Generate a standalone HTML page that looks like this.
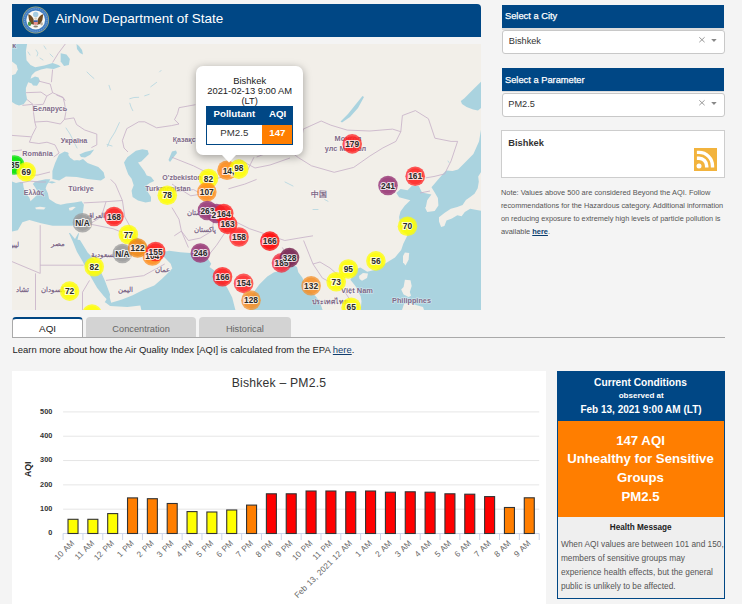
<!DOCTYPE html>
<html><head><meta charset="utf-8">
<style>
*{box-sizing:border-box;margin:0;padding:0}
html,body{width:742px;height:604px;overflow:hidden;background:#f4f4f4;font-family:"Liberation Sans",sans-serif;position:relative}
.abs{position:absolute}
</style></head><body>
<div class="abs" style="left:12px;top:4px;width:469px;height:33px;background:#004785;border-radius:0 4px 0 0"></div>
<svg class="abs" style="left:0;top:0" width="60" height="40" viewBox="0 0 60 40">
<circle cx="35.7" cy="20" r="13.4" fill="#a9ad78"/>
<circle cx="35.7" cy="20" r="12.7" fill="#3f7cc0"/>
<circle cx="35.7" cy="20" r="11.3" fill="none" stroke="#7fa6d6" stroke-width="1" stroke-dasharray="1.2 1"/>
<circle cx="35.7" cy="20" r="9.4" fill="#f8f8f4"/>
<circle cx="35.7" cy="14.4" r="2.7" fill="#a5cde2"/>
<path d="M28.2 14.2 Q31.5 14.8 33.5 19 L34.3 24.8 L31 24 Q28.3 20 28.2 14.2Z" fill="#6e4b22"/>
<path d="M43.2 14.2 Q39.9 14.8 37.9 19 L37.1 24.8 L40.4 24 Q43.1 20 43.2 14.2Z" fill="#6e4b22"/>
<circle cx="35.7" cy="18.5" r="1.3" fill="#d9d2c0"/>
<rect x="33.7" y="20.3" width="4" height="1.7" fill="#3a5ea8"/>
<path d="M33.7 22 H37.7 V24 Q35.7 26.2 33.7 24Z" fill="#e58b8b"/>
<ellipse cx="29.6" cy="23.8" rx="1.7" ry="2.2" fill="#4f9a4a"/>
<ellipse cx="41.6" cy="23.8" rx="1.3" ry="1.8" fill="#b9b0a0"/>
<ellipse cx="35.7" cy="26.6" rx="2.3" ry="1" fill="#8a8472"/>
</svg>
<div class="abs" style="left:55.20px;top:11.63px;font-size:13.5px;line-height:13.5px;color:#fff;font-weight:normal;white-space:nowrap;">AirNow Department of State</div>
<div class="abs" style="left:12px;top:44px;width:469px;height:266px;overflow:hidden;background:#f2efe9"><svg style="position:absolute;left:0;top:0" width="469" height="266" viewBox="12 44 469 266">
<rect x="12" y="44" width="469" height="266" fill="#f2efe9"/>
<polygon points="12.0,44.0 27.1,44.0 25.9,51.0 26.5,60.2 30.5,64.9 35.2,67.2 44.4,65.4 52.6,63.1 58.3,64.9 60.7,66.6 53.7,68.9 46.8,68.3 41.0,69.5 35.2,71.8 31.7,75.3 30.5,78.8 35.0,76.5 38.5,77.5 40.0,81.1 37.0,85.7 33.0,85.5 31.7,83.4 28.2,82.2 25.9,88.0 25.9,92.7 27.1,99.6 23.6,104.3 19.0,105.4 15.5,104.3 12.0,101.9" fill="#aad3df"/>
<polygon points="60.7,53.3 66.5,54.4 69.9,59.1 68.8,64.9 64.1,66.0 60.7,61.4" fill="#aad3df"/>
<polygon points="76.5,44.0 79.0,46.0 82.0,50.0 83.0,54.4 80.0,53.0 77.0,49.0" fill="#aad3df"/>
<polygon points="52.4,171.0 55.1,162.9 59.0,154.5 64.6,151.5 68.0,152.5 70.0,156.0 74.0,159.5 79.4,160.5 83.0,159.0 87.5,162.9 98.3,167.0 103.6,172.3 105.0,177.7 100.9,180.4 87.5,179.1 76.7,177.1 65.9,176.4 59.2,180.4 52.4,179.1" fill="#aad3df"/>
<polygon points="79.4,154.5 85.0,152.0 90.2,150.8 94.2,149.4 90.2,154.8 85.0,157.5 81.0,157.0" fill="#aad3df"/>
<polygon points="47.0,182.0 52.0,181.3 56.0,182.3 52.0,183.5" fill="#aad3df"/>
<polygon points="12.0,181.6 16.0,183.0 20.0,182.0 23.0,182.8 23.6,187.4 25.9,193.2 29.4,197.8 30.5,201.3 32.9,199.0 35.2,196.7 38.7,193.2 35.2,187.4 32.9,183.9 35.2,181.6 39.8,180.4 45.6,179.3 50.3,179.3 49.1,181.6 46.8,185.1 45.6,188.6 47.9,193.2 49.1,199.0 56.1,203.6 60.7,204.8 66.5,203.6 74.6,202.5 81.6,201.3 83.9,204.8 82.7,214.1 81.6,222.2 72.3,225.7 64.2,225.7 52.6,225.7 41.0,223.3 29.4,219.9 22.4,222.2 17.8,230.3 12.0,231.4" fill="#aad3df"/>
<polygon points="68.9,232.9 70.0,233.0 75.0,239.0 78.4,232.9 79.0,233.5 77.5,239.8 80.0,240.0 87.8,252.7 94.0,259.0 100.0,270.0 105.0,281.0 110.1,294.4 108.5,300.9 103.7,296.0 97.2,287.9 92.0,279.0 86.0,268.0 82.8,261.7 76.9,251.7 72.9,241.8" fill="#aad3df"/>
<polygon points="135.9,150.8 142.3,149.2 147.7,150.2 148.8,154.0 145.6,157.3 141.3,161.6 138.0,162.6 141.3,167.0 144.5,171.3 146.7,175.6 151.0,176.7 154.2,181.0 149.9,183.1 146.7,185.3 147.7,191.8 151.0,197.1 151.0,201.5 145.6,202.5 138.0,200.4 132.6,197.1 131.6,190.7 133.7,185.3 131.6,178.8 128.3,174.5 126.2,169.1 124.0,162.6 127.3,157.3 131.6,154.0" fill="#aad3df"/>
<polygon points="172.0,151.5 176.0,150.5 177.0,153.0 173.0,158.0 170.0,162.0 168.5,160.0" fill="#aad3df"/>
<polygon points="134.0,236.0 138.0,238.0 145.0,244.0 152.0,248.0 158.0,250.0 163.0,252.0 165.0,256.0 160.0,256.0 152.0,254.0 146.0,251.0 140.0,247.0 135.0,241.0" fill="#aad3df"/>
<polygon points="109.0,295.2 111.2,302.7 122.0,299.5 132.7,295.2 143.5,289.8 154.3,285.5 161.8,279.0 166.2,274.7 172.3,268.5 170.7,263.7 164.3,257.2 158.0,254.0 161.0,252.3 169.1,250.7 180.4,252.3 193.4,253.2 204.7,254.0 207.9,258.8 211.2,263.7 209.5,266.9 216.0,271.8 220.9,278.2 227.3,287.9 232.2,297.6 235.4,310.0 100.0,310.0" fill="#aad3df"/>
<polygon points="249.8,310.0 252.5,293.9 259.3,284.5 267.3,276.4 274.1,272.3 280.8,271.0 288.9,268.3 294.3,265.6 297.0,267.0 298.3,272.3 302.4,277.7 305.1,284.5 310.5,291.2 315.9,296.6 319.9,302.0 322.6,310.0" fill="#aad3df"/>
<polygon points="482.0,124.0 479.0,141.4 473.4,154.0 465.0,162.5 458.0,169.5 452.5,171.0 446.5,170.5 444.4,172.2 437.9,179.7 431.5,187.2 434.7,192.6 437.9,198.0 438.4,205.5 434.7,210.9 427.2,211.9 425.0,207.6 425.8,207.2 427.2,200.2 431.4,194.5 424.4,193.1 421.6,191.7 418.8,186.1 411.7,186.1 407.5,190.3 400.5,188.9 396.3,193.1 399.1,197.3 410.3,200.2 404.7,205.8 400.5,211.4 399.1,217.0 400.5,228.3 407.5,235.3 403.3,243.8 401.2,249.9 395.0,257.4 386.0,262.9 376.6,269.6 367.2,271.7 360.4,267.6 356.4,269.0 353.7,275.0 350.3,279.8 353.8,284.1 356.4,287.5 358.1,291.8 360.7,296.2 361.5,301.3 360.7,310.0 482.0,310.0" fill="#aad3df"/>
<polygon points="482.0,80.9 473.1,89.5 464.4,98.2 460.8,101.0 462.0,104.0 466.6,106.9 473.1,109.5 478.0,110.5 482.0,107.0" fill="#aad3df"/>
<polygon points="362.5,96.0 364.0,97.0 358.0,108.0 350.0,117.0 342.0,122.5 340.5,121.5 348.0,114.0 356.0,104.0" fill="#aad3df"/>
<polygon points="12.0,61.4 16.6,64.9 17.8,69.5 15.5,74.1 12.0,75.3" fill="#f2efe9"/>
<polygon points="68.0,154.5 72.0,153.0 77.0,154.5 80.0,157.0 78.0,160.0 74.0,160.5 70.0,157.5" fill="#f2efe9"/>
<polygon points="35.2,207.5 40.0,206.8 45.6,207.6 44.0,209.4 36.0,209.2" fill="#f2efe9"/>
<polygon points="68.8,208.0 73.0,206.8 75.8,207.0 72.0,210.2 69.5,210.6" fill="#f2efe9"/>
<polygon points="100.0,310.0 100.0,300.0 105.8,302.7 110.1,306.0 127.3,307.0 140.3,305.4 141.4,310.0" fill="#f2efe9"/>
<polygon points="439.0,217.3 444.4,213.0 450.8,208.7 457.3,207.1 462.6,205.0 465.9,200.1 470.2,196.9 474.5,193.7 477.7,188.3 478.8,181.8 478.2,176.5 480.9,172.2 482.0,172.2 482.0,210.9 475.5,209.8 470.2,208.7 464.8,211.9 461.6,216.2 457.3,215.2 451.9,218.4 446.5,220.5 444.4,225.9 441.1,227.0 439.0,221.6" fill="#f2efe9"/>
<polygon points="404.9,252.4 409.2,253.0 408.6,259.8 405.5,265.4 403.0,262.3 403.0,256.1" fill="#f2efe9"/>
<polygon points="404.9,279.7 410.5,280.3 411.7,285.9 409.8,292.1 411.1,295.8 408.6,297.0 403.6,294.6 401.2,289.6 403.6,287.1" fill="#f2efe9"/>
<polygon points="359.0,276.0 363.0,273.0 368.0,273.5 367.0,278.0 362.0,280.7 359.5,279.0" fill="#f2efe9"/>
<polygon points="402.0,310.0 404.0,304.0 410.0,303.0 416.0,305.0 423.0,307.0 424.0,310.0" fill="#f2efe9"/>
<polyline points="129.8,98.7 134.0,97.5 138.7,97.3" fill="none" stroke="#aad3df" stroke-width="0.9" stroke-opacity="0.8" stroke-linecap="round"/>
<polyline points="129.8,103.2 131.0,107.0 132.8,110.7" fill="none" stroke="#aad3df" stroke-width="0.9" stroke-opacity="0.8" stroke-linecap="round"/>
<polyline points="144.7,95.8 149.2,94.3" fill="none" stroke="#aad3df" stroke-width="0.9" stroke-opacity="0.8" stroke-linecap="round"/>
<polyline points="150.7,86.8 156.6,82.4" fill="none" stroke="#aad3df" stroke-width="0.9" stroke-opacity="0.8" stroke-linecap="round"/>
<polyline points="159.6,71.9 161.1,70.4" fill="none" stroke="#aad3df" stroke-width="0.9" stroke-opacity="0.8" stroke-linecap="round"/>
<polyline points="109.0,85.3 110.4,89.8" fill="none" stroke="#aad3df" stroke-width="0.9" stroke-opacity="0.8" stroke-linecap="round"/>
<polyline points="119.4,122.6 115.0,132.0 110.0,140.0 107.5,146.4" fill="none" stroke="#aad3df" stroke-width="0.9" stroke-opacity="0.8" stroke-linecap="round"/>
<polyline points="87.0,72.0 90.0,75.0 94.0,78.5" fill="none" stroke="#aad3df" stroke-width="0.9" stroke-opacity="0.8" stroke-linecap="round"/>
<polyline points="66.0,128.0 70.0,134.0 74.0,142.0 77.0,148.0" fill="none" stroke="#aad3df" stroke-width="0.9" stroke-opacity="0.8" stroke-linecap="round"/>
<polyline points="107.0,144.5 112.0,146.0" fill="none" stroke="#aad3df" stroke-width="0.9" stroke-opacity="0.8" stroke-linecap="round"/>
<polyline points="285.0,182.0 289.0,184.0 293.0,186.0" fill="none" stroke="#aad3df" stroke-width="0.9" stroke-opacity="0.8" stroke-linecap="round"/>
<polyline points="324.7,199.6 328.0,201.3" fill="none" stroke="#aad3df" stroke-width="0.9" stroke-opacity="0.8" stroke-linecap="round"/>
<polyline points="313.0,209.5 318.0,209.5" fill="none" stroke="#aad3df" stroke-width="0.9" stroke-opacity="0.8" stroke-linecap="round"/>
<polyline points="448.0,161.0 449.0,162.5" fill="none" stroke="#aad3df" stroke-width="0.9" stroke-opacity="0.8" stroke-linecap="round"/>
<polyline points="28.0,52.0 30.0,55.0" fill="none" stroke="#aad3df" stroke-width="0.9" stroke-opacity="0.8" stroke-linecap="round"/>
<polyline points="36.0,50.0 38.0,53.0 37.0,56.0" fill="none" stroke="#aad3df" stroke-width="0.9" stroke-opacity="0.8" stroke-linecap="round"/>
<polyline points="44.0,46.0 46.0,49.0" fill="none" stroke="#aad3df" stroke-width="0.9" stroke-opacity="0.8" stroke-linecap="round"/>
<polyline points="50.0,54.0 53.0,57.0" fill="none" stroke="#aad3df" stroke-width="0.9" stroke-opacity="0.8" stroke-linecap="round"/>
<polyline points="40.0,58.0 43.0,60.0" fill="none" stroke="#aad3df" stroke-width="0.9" stroke-opacity="0.8" stroke-linecap="round"/>
<polyline points="65.3,44.0 58.3,53.3 52.6,62.5" fill="none" stroke="#c5aec6" stroke-width="0.8"/>
<polyline points="52.6,69.5 51.4,82.2" fill="none" stroke="#c5aec6" stroke-width="0.8"/>
<polyline points="38.7,81.1 50.2,84.0" fill="none" stroke="#c5aec6" stroke-width="0.8"/>
<polyline points="50.2,84.0 52.6,92.7 63.0,97.3 65.3,100.8" fill="none" stroke="#c5aec6" stroke-width="0.8"/>
<polyline points="25.9,92.7 41.0,92.1 46.8,96.1 52.6,92.7" fill="none" stroke="#c5aec6" stroke-width="0.8"/>
<polyline points="46.8,96.1 43.3,104.3 32.8,105.1" fill="none" stroke="#c5aec6" stroke-width="0.8"/>
<polyline points="27.1,99.6 32.9,104.3 22.4,105.4" fill="none" stroke="#c5aec6" stroke-width="0.8"/>
<polyline points="56.4,95.0 63.1,97.7 64.5,103.1 65.8,112.5 64.5,119.3" fill="none" stroke="#c5aec6" stroke-width="0.8"/>
<polyline points="34.8,122.0 47.0,121.3 60.4,124.0 64.5,119.3" fill="none" stroke="#c5aec6" stroke-width="0.8"/>
<polyline points="34.8,122.0 33.5,112.5 32.8,105.1" fill="none" stroke="#c5aec6" stroke-width="0.8"/>
<polyline points="64.5,119.3 73.9,117.9 76.6,124.6 84.7,130.0 96.8,134.1 96.8,144.9 91.4,147.6" fill="none" stroke="#c5aec6" stroke-width="0.8"/>
<polyline points="34.8,122.0 36.2,127.3 32.1,135.4 29.4,142.2" fill="none" stroke="#c5aec6" stroke-width="0.8"/>
<polyline points="12.0,135.4 30.8,136.8" fill="none" stroke="#c5aec6" stroke-width="0.8"/>
<polyline points="47.0,142.2 55.0,144.9 59.1,153.0 53.7,157.0" fill="none" stroke="#c5aec6" stroke-width="0.8"/>
<polyline points="29.4,142.2 38.9,143.5 47.0,142.2" fill="none" stroke="#c5aec6" stroke-width="0.8"/>
<polyline points="12.0,151.0 22.0,150.0" fill="none" stroke="#c5aec6" stroke-width="0.8"/>
<polyline points="12.0,172.0 22.0,176.0 38.0,175.0 50.0,172.0" fill="none" stroke="#c5aec6" stroke-width="0.8"/>
<polyline points="20.0,183.0 30.0,181.0 38.0,182.0 46.0,182.0" fill="none" stroke="#c5aec6" stroke-width="0.8"/>
<polyline points="128.0,152.0 124.0,148.0 122.4,140.5 126.8,128.6 138.7,121.8 144.7,121.8 156.6,127.8 171.5,125.6 179.0,124.0 174.5,119.6 177.5,113.7 179.0,107.7 195.4,104.7" fill="none" stroke="#c5aec6" stroke-width="0.8"/>
<polyline points="83.7,202.9 106.0,201.7 122.4,200.5" fill="none" stroke="#c5aec6" stroke-width="0.8"/>
<polyline points="122.4,200.5 115.4,184.1 110.7,179.4" fill="none" stroke="#c5aec6" stroke-width="0.8"/>
<polyline points="106.0,201.7 101.3,217.0 89.5,224.0" fill="none" stroke="#c5aec6" stroke-width="0.8"/>
<polyline points="122.4,200.5 124.8,217.0 136.5,238.1" fill="none" stroke="#c5aec6" stroke-width="0.8"/>
<polyline points="89.5,224.0 113.0,228.7 136.5,238.1" fill="none" stroke="#c5aec6" stroke-width="0.8"/>
<polyline points="40.2,225.2 40.2,273.4" fill="none" stroke="#c5aec6" stroke-width="0.8"/>
<polyline points="40.2,265.2 83.7,265.2" fill="none" stroke="#c5aec6" stroke-width="0.8"/>
<polyline points="12.0,261.6 40.2,273.4" fill="none" stroke="#c5aec6" stroke-width="0.8"/>
<polyline points="35.5,273.4 35.5,312.0" fill="none" stroke="#c5aec6" stroke-width="0.8"/>
<polyline points="106.0,280.4 143.6,275.7 164.7,264.0" fill="none" stroke="#c5aec6" stroke-width="0.8"/>
<polyline points="89.5,280.4 82.5,292.2 82.5,312.0" fill="none" stroke="#c5aec6" stroke-width="0.8"/>
<polyline points="172.0,184.1 190.8,195.8 204.9,193.5" fill="none" stroke="#c5aec6" stroke-width="0.8"/>
<polyline points="202.5,202.9 214.3,217.0 212.0,231.1 200.2,238.1 188.4,240.5 181.4,231.1 174.3,235.8" fill="none" stroke="#c5aec6" stroke-width="0.8"/>
<polyline points="172.0,207.6 179.0,219.3 181.4,231.1 188.4,247.5" fill="none" stroke="#c5aec6" stroke-width="0.8"/>
<polyline points="219.0,217.0 226.0,231.1 216.6,245.2 207.2,256.9" fill="none" stroke="#c5aec6" stroke-width="0.8"/>
<polyline points="226.0,217.0 249.5,228.7 270.7,235.8 284.8,240.5 298.9,238.1 313.0,235.8" fill="none" stroke="#c5aec6" stroke-width="0.8"/>
<polyline points="228.4,188.8 244.8,184.1 256.6,179.4" fill="none" stroke="#c5aec6" stroke-width="0.8"/>
<polyline points="282.4,247.5 291.8,264.0" fill="none" stroke="#c5aec6" stroke-width="0.8"/>
<polyline points="303.6,240.5 313.0,264.0 322.4,278.1" fill="none" stroke="#c5aec6" stroke-width="0.8"/>
<polyline points="172.0,157.3 193.6,165.9 210.8,174.5" fill="none" stroke="#c5aec6" stroke-width="0.8"/>
<polyline points="215.1,178.8 228.1,175.6" fill="none" stroke="#c5aec6" stroke-width="0.8"/>
<polyline points="253.9,157.3 247.5,170.2" fill="none" stroke="#c5aec6" stroke-width="0.8"/>
<polyline points="172.0,191.8 193.6,189.6 208.7,198.2" fill="none" stroke="#c5aec6" stroke-width="0.8"/>
<polyline points="240.0,160.0 255.0,168.0 270.0,165.0 290.0,158.0" fill="none" stroke="#c5aec6" stroke-width="0.8"/>
<polyline points="214.0,100.0 240.0,116.0 270.0,118.0 300.0,112.0" fill="none" stroke="#c5aec6" stroke-width="0.8"/>
<polyline points="303.3,129.1 321.2,121.0 330.9,125.2 347.2,130.1 369.9,131.0 392.6,129.1 400.8,131.7 395.9,141.4 382.9,147.9 369.9,156.0 353.7,167.4 334.2,172.3 311.5,165.8 298.5,157.7 292.0,152.8 301.7,138.2 303.3,129.1" fill="none" stroke="#c5aec6" stroke-width="0.8"/>
<polyline points="400.8,131.7 402.4,115.5 415.4,110.6 428.4,118.7 434.9,138.2 451.1,141.4 457.6,141.4 451.1,160.9 444.6,173.9 434.0,176.5 425.6,177.9" fill="none" stroke="#c5aec6" stroke-width="0.8"/>
<polyline points="303.3,129.1 296.0,125.0 290.0,120.0" fill="none" stroke="#c5aec6" stroke-width="0.8"/>
<polyline points="292.0,152.8 280.0,150.0 270.0,152.0 256.6,157.0" fill="none" stroke="#c5aec6" stroke-width="0.8"/>
<polyline points="420.0,193.0 430.0,191.0" fill="none" stroke="#c5aec6" stroke-width="0.8"/>
<polyline points="322.4,278.1 330.0,282.0 338.0,286.0 345.0,292.0 350.0,300.0" fill="none" stroke="#c5aec6" stroke-width="0.8"/>
<polyline points="313.0,264.0 320.0,262.0 330.0,268.0 338.0,275.0" fill="none" stroke="#c5aec6" stroke-width="0.8"/>
<text x="14.2" y="47.6" text-anchor="middle" font-size="7" font-weight="bold" fill="#806a88" stroke="#fff" stroke-opacity="0.5" stroke-width="1.2" paint-order="stroke" style="font-family:'Liberation Sans',sans-serif">k</text>
<text x="50" y="110.5" text-anchor="middle" font-size="7.2" font-weight="bold" fill="#806a88" stroke="#fff" stroke-opacity="0.5" stroke-width="1.2" paint-order="stroke" style="font-family:'Liberation Sans',sans-serif">Беларусь</text>
<text x="74" y="142.5" text-anchor="middle" font-size="7.2" font-weight="bold" fill="#806a88" stroke="#fff" stroke-opacity="0.5" stroke-width="1.2" paint-order="stroke" style="font-family:'Liberation Sans',sans-serif">Україна</text>
<text x="37.5" y="155.5" text-anchor="middle" font-size="7.2" font-weight="bold" fill="#806a88" stroke="#fff" stroke-opacity="0.5" stroke-width="1.2" paint-order="stroke" style="font-family:'Liberation Sans',sans-serif">România</text>
<text x="81" y="191" text-anchor="middle" font-size="7.2" font-weight="bold" fill="#806a88" stroke="#fff" stroke-opacity="0.5" stroke-width="1.2" paint-order="stroke" style="font-family:'Liberation Sans',sans-serif">Türkiye</text>
<text x="34" y="195" text-anchor="middle" font-size="7" font-weight="bold" fill="#806a88" stroke="#fff" stroke-opacity="0.5" stroke-width="1.2" paint-order="stroke" style="font-family:'Liberation Sans',sans-serif">Ελλάς</text>
<text x="190" y="142" text-anchor="middle" font-size="7" font-weight="bold" fill="#806a88" stroke="#fff" stroke-opacity="0.5" stroke-width="1.2" paint-order="stroke" style="font-family:'Liberation Sans',sans-serif">Қазақстан</text>
<text x="182" y="180" text-anchor="middle" font-size="7" font-weight="bold" fill="#806a88" stroke="#fff" stroke-opacity="0.5" stroke-width="1.2" paint-order="stroke" style="font-family:'Liberation Sans',sans-serif">O'zbekiston</text>
<text x="168" y="191" text-anchor="middle" font-size="7" font-weight="bold" fill="#806a88" stroke="#fff" stroke-opacity="0.5" stroke-width="1.2" paint-order="stroke" style="font-family:'Liberation Sans',sans-serif">Turkmenistan</text>
<text x="319" y="197" text-anchor="middle" font-size="7.5" font-weight="bold" fill="#806a88" stroke="#fff" stroke-opacity="0.5" stroke-width="1.2" paint-order="stroke" style="font-family:'Liberation Sans',sans-serif">中国</text>
<text x="357" y="292.5" text-anchor="middle" font-size="7.5" font-weight="bold" fill="#806a88" stroke="#fff" stroke-opacity="0.5" stroke-width="1.2" paint-order="stroke" style="font-family:'Liberation Sans',sans-serif">Việt Nam</text>
<text x="411.5" y="302.6" text-anchor="middle" font-size="7.3" font-weight="bold" fill="#806a88" stroke="#fff" stroke-opacity="0.5" stroke-width="1.2" paint-order="stroke" style="font-family:'Liberation Sans',sans-serif">Philippines</text>
<text x="57.5" y="246" text-anchor="middle" font-size="7" font-weight="bold" fill="#806a88" stroke="#fff" stroke-opacity="0.5" stroke-width="1.2" paint-order="stroke" style="font-family:'Liberation Sans',sans-serif">مصر</text>
<text x="96" y="217.5" text-anchor="middle" font-size="7" font-weight="bold" fill="#806a88" stroke="#fff" stroke-opacity="0.5" stroke-width="1.2" paint-order="stroke" style="font-family:'Liberation Sans',sans-serif">العراق</text>
<text x="104" y="256.5" text-anchor="middle" font-size="7" font-weight="bold" fill="#806a88" stroke="#fff" stroke-opacity="0.5" stroke-width="1.2" paint-order="stroke" style="font-family:'Liberation Sans',sans-serif">السعودية</text>
<text x="162" y="272" text-anchor="middle" font-size="7" font-weight="bold" fill="#806a88" stroke="#fff" stroke-opacity="0.5" stroke-width="1.2" paint-order="stroke" style="font-family:'Liberation Sans',sans-serif">عمان</text>
<text x="125" y="292" text-anchor="middle" font-size="7" font-weight="bold" fill="#806a88" stroke="#fff" stroke-opacity="0.5" stroke-width="1.2" paint-order="stroke" style="font-family:'Liberation Sans',sans-serif">اليمن</text>
<text x="53" y="292" text-anchor="middle" font-size="7" font-weight="bold" fill="#806a88" stroke="#fff" stroke-opacity="0.5" stroke-width="1.2" paint-order="stroke" style="font-family:'Liberation Sans',sans-serif">السودان</text>
<text x="22" y="292" text-anchor="middle" font-size="7" font-weight="bold" fill="#806a88" stroke="#fff" stroke-opacity="0.5" stroke-width="1.2" paint-order="stroke" style="font-family:'Liberation Sans',sans-serif">تشاد</text>
<text x="14" y="247" text-anchor="middle" font-size="7" font-weight="bold" fill="#806a88" stroke="#fff" stroke-opacity="0.5" stroke-width="1.2" paint-order="stroke" style="font-family:'Liberation Sans',sans-serif">ليبيا</text>
<text x="200" y="215" text-anchor="middle" font-size="7" font-weight="bold" fill="#806a88" stroke="#fff" stroke-opacity="0.5" stroke-width="1.2" paint-order="stroke" style="font-family:'Liberation Sans',sans-serif">افغانستان</text>
<text x="205" y="232" text-anchor="middle" font-size="7" font-weight="bold" fill="#806a88" stroke="#fff" stroke-opacity="0.5" stroke-width="1.2" paint-order="stroke" style="font-family:'Liberation Sans',sans-serif">پاکستان</text>
<text x="348" y="140.5" text-anchor="middle" font-size="7.3" font-weight="bold" fill="#806a88" stroke="#fff" stroke-opacity="0.5" stroke-width="1.2" paint-order="stroke" style="font-family:'Liberation Sans',sans-serif">Монгол</text>
<text x="345.5" y="150.8" text-anchor="middle" font-size="7.3" font-weight="bold" fill="#806a88" stroke="#fff" stroke-opacity="0.5" stroke-width="1.2" paint-order="stroke" style="font-family:'Liberation Sans',sans-serif">улс Монгол</text>
<text x="330" y="304" text-anchor="middle" font-size="7" font-weight="bold" fill="#806a88" stroke="#fff" stroke-opacity="0.5" stroke-width="1.2" paint-order="stroke" style="font-family:'Liberation Sans',sans-serif">ประเทศไทย</text>
<circle cx="14.7" cy="165" r="9.8" fill="#00e400" fill-opacity="0.75"/><circle cx="14.7" cy="165" r="8" fill="#00e400" fill-opacity="0.6"/>
<circle cx="26.2" cy="171.7" r="9.8" fill="#ffff00" fill-opacity="0.75"/><circle cx="26.2" cy="171.7" r="8" fill="#ffff00" fill-opacity="0.6"/>
<circle cx="208.5" cy="178.5" r="9.8" fill="#ffff00" fill-opacity="0.75"/><circle cx="208.5" cy="178.5" r="8" fill="#ffff00" fill-opacity="0.6"/>
<circle cx="227" cy="170.2" r="9.8" fill="#ff8c1a" fill-opacity="0.75"/><circle cx="227" cy="170.2" r="8" fill="#ff8c1a" fill-opacity="0.6"/>
<circle cx="238.8" cy="169.1" r="9.8" fill="#ffff00" fill-opacity="0.75"/><circle cx="238.8" cy="169.1" r="8" fill="#ffff00" fill-opacity="0.6"/>
<circle cx="206.8" cy="191.9" r="9.8" fill="#ff8c1a" fill-opacity="0.75"/><circle cx="206.8" cy="191.9" r="8" fill="#ff8c1a" fill-opacity="0.6"/>
<circle cx="167.3" cy="195.3" r="9.8" fill="#ffff00" fill-opacity="0.75"/><circle cx="167.3" cy="195.3" r="8" fill="#ffff00" fill-opacity="0.6"/>
<circle cx="114" cy="216.5" r="9.8" fill="#ff1a1a" fill-opacity="0.75"/><circle cx="114" cy="216.5" r="8" fill="#ff1a1a" fill-opacity="0.6"/>
<circle cx="82.5" cy="222.7" r="9.8" fill="#9a9a9a" fill-opacity="0.75"/><circle cx="82.5" cy="222.7" r="8" fill="#9a9a9a" fill-opacity="0.6"/>
<circle cx="128.3" cy="234.5" r="9.8" fill="#ffff00" fill-opacity="0.75"/><circle cx="128.3" cy="234.5" r="8" fill="#ffff00" fill-opacity="0.6"/>
<circle cx="122.4" cy="253.5" r="9.8" fill="#9a9a9a" fill-opacity="0.75"/><circle cx="122.4" cy="253.5" r="8" fill="#9a9a9a" fill-opacity="0.6"/>
<circle cx="137.6" cy="248" r="9.8" fill="#f0860f" fill-opacity="0.75"/><circle cx="137.6" cy="248" r="8" fill="#f0860f" fill-opacity="0.6"/>
<circle cx="152.3" cy="256" r="9.8" fill="#ff8c1a" fill-opacity="0.75"/><circle cx="152.3" cy="256" r="8" fill="#ff8c1a" fill-opacity="0.6"/>
<circle cx="155.6" cy="251.5" r="9.8" fill="#ff1a1a" fill-opacity="0.75"/><circle cx="155.6" cy="251.5" r="8" fill="#ff1a1a" fill-opacity="0.6"/>
<circle cx="94.2" cy="266.8" r="9.8" fill="#ffff00" fill-opacity="0.75"/><circle cx="94.2" cy="266.8" r="8" fill="#ffff00" fill-opacity="0.6"/>
<circle cx="69.6" cy="291.1" r="9.8" fill="#ffff00" fill-opacity="0.75"/><circle cx="69.6" cy="291.1" r="8" fill="#ffff00" fill-opacity="0.6"/>
<circle cx="92" cy="314" r="9.8" fill="#ffff00" fill-opacity="0.75"/><circle cx="92" cy="314" r="8" fill="#ffff00" fill-opacity="0.6"/>
<circle cx="207.4" cy="210.5" r="9.8" fill="#9b3d7a" fill-opacity="0.85"/><circle cx="207.4" cy="210.5" r="8" fill="#9b3d7a" fill-opacity="0.6"/>
<circle cx="216.6" cy="213.5" r="9.8" fill="#9b3d7a" fill-opacity="0.85"/><circle cx="216.6" cy="213.5" r="8" fill="#9b3d7a" fill-opacity="0.6"/>
<circle cx="223.7" cy="213.5" r="9.8" fill="#ff1a1a" fill-opacity="0.75"/><circle cx="223.7" cy="213.5" r="8" fill="#ff1a1a" fill-opacity="0.6"/>
<circle cx="227.6" cy="224.4" r="9.8" fill="#ff1a1a" fill-opacity="0.75"/><circle cx="227.6" cy="224.4" r="8" fill="#ff1a1a" fill-opacity="0.6"/>
<circle cx="239" cy="237" r="9.8" fill="#ff2a2a" fill-opacity="0.75"/><circle cx="239" cy="237" r="8" fill="#ff2a2a" fill-opacity="0.6"/>
<circle cx="269.8" cy="241.1" r="9.8" fill="#ff0000" fill-opacity="0.75"/><circle cx="269.8" cy="241.1" r="8" fill="#ff0000" fill-opacity="0.6"/>
<circle cx="200.4" cy="253" r="9.8" fill="#9b3d7a" fill-opacity="0.85"/><circle cx="200.4" cy="253" r="8" fill="#9b3d7a" fill-opacity="0.6"/>
<circle cx="281.5" cy="262.9" r="9.8" fill="#f0283a" fill-opacity="0.75"/><circle cx="281.5" cy="262.9" r="8" fill="#f0283a" fill-opacity="0.6"/>
<circle cx="289.5" cy="257.6" r="9.8" fill="#7a2a55" fill-opacity="0.85"/><circle cx="289.5" cy="257.6" r="8" fill="#7a2a55" fill-opacity="0.6"/>
<circle cx="222.5" cy="276.8" r="9.8" fill="#ff1a1a" fill-opacity="0.75"/><circle cx="222.5" cy="276.8" r="8" fill="#ff1a1a" fill-opacity="0.6"/>
<circle cx="243.6" cy="283.4" r="9.8" fill="#ff2a2a" fill-opacity="0.75"/><circle cx="243.6" cy="283.4" r="8" fill="#ff2a2a" fill-opacity="0.6"/>
<circle cx="251" cy="300.3" r="9.8" fill="#f4902a" fill-opacity="0.75"/><circle cx="251" cy="300.3" r="8" fill="#f4902a" fill-opacity="0.6"/>
<circle cx="311.1" cy="285.8" r="9.8" fill="#f4902a" fill-opacity="0.75"/><circle cx="311.1" cy="285.8" r="8" fill="#f4902a" fill-opacity="0.6"/>
<circle cx="336.2" cy="281.8" r="9.8" fill="#ffff00" fill-opacity="0.75"/><circle cx="336.2" cy="281.8" r="8" fill="#ffff00" fill-opacity="0.6"/>
<circle cx="348.3" cy="269" r="9.8" fill="#ffff00" fill-opacity="0.75"/><circle cx="348.3" cy="269" r="8" fill="#ffff00" fill-opacity="0.6"/>
<circle cx="375.9" cy="260.9" r="9.8" fill="#ffff00" fill-opacity="0.75"/><circle cx="375.9" cy="260.9" r="8" fill="#ffff00" fill-opacity="0.6"/>
<circle cx="351.2" cy="307.3" r="9.8" fill="#ffff00" fill-opacity="0.75"/><circle cx="351.2" cy="307.3" r="8" fill="#ffff00" fill-opacity="0.6"/>
<circle cx="407.5" cy="226.2" r="9.8" fill="#ffff00" fill-opacity="0.75"/><circle cx="407.5" cy="226.2" r="8" fill="#ffff00" fill-opacity="0.6"/>
<circle cx="415.2" cy="176.3" r="9.8" fill="#ff2222" fill-opacity="0.75"/><circle cx="415.2" cy="176.3" r="8" fill="#ff2222" fill-opacity="0.6"/>
<circle cx="388" cy="185.5" r="9.8" fill="#9b3d7a" fill-opacity="0.85"/><circle cx="388" cy="185.5" r="8" fill="#9b3d7a" fill-opacity="0.6"/>
<circle cx="352.2" cy="143.9" r="9.8" fill="#ff2222" fill-opacity="0.75"/><circle cx="352.2" cy="143.9" r="8" fill="#ff2222" fill-opacity="0.6"/>
<text x="14.7" y="168" text-anchor="middle" font-size="8.4" font-weight="bold" fill="#2a2a2a" stroke="#fff" stroke-width="2.2" stroke-opacity="0.8" paint-order="stroke" style="font-family:'Liberation Sans',sans-serif">35</text>
<text x="26.2" y="174.7" text-anchor="middle" font-size="8.4" font-weight="bold" fill="#2a2a2a" stroke="#fff" stroke-width="2.2" stroke-opacity="0.8" paint-order="stroke" style="font-family:'Liberation Sans',sans-serif">69</text>
<text x="208.5" y="181.5" text-anchor="middle" font-size="8.4" font-weight="bold" fill="#2a2a2a" stroke="#fff" stroke-width="2.2" stroke-opacity="0.8" paint-order="stroke" style="font-family:'Liberation Sans',sans-serif">82</text>
<text x="228.5" y="173.7" text-anchor="middle" font-size="8.4" font-weight="bold" fill="#2a2a2a" stroke="#fff" stroke-width="2.2" stroke-opacity="0.8" paint-order="stroke" style="font-family:'Liberation Sans',sans-serif">14,</text>
<text x="238.8" y="170.9" text-anchor="middle" font-size="8.4" font-weight="bold" fill="#2a2a2a" stroke="#fff" stroke-width="2.2" stroke-opacity="0.8" paint-order="stroke" style="font-family:'Liberation Sans',sans-serif">98</text>
<text x="206.8" y="194.9" text-anchor="middle" font-size="8.4" font-weight="bold" fill="#2a2a2a" stroke="#fff" stroke-width="2.2" stroke-opacity="0.8" paint-order="stroke" style="font-family:'Liberation Sans',sans-serif">107</text>
<text x="167.3" y="198.3" text-anchor="middle" font-size="8.4" font-weight="bold" fill="#2a2a2a" stroke="#fff" stroke-width="2.2" stroke-opacity="0.8" paint-order="stroke" style="font-family:'Liberation Sans',sans-serif">78</text>
<text x="114" y="219.5" text-anchor="middle" font-size="8.4" font-weight="bold" fill="#2a2a2a" stroke="#fff" stroke-width="2.2" stroke-opacity="0.8" paint-order="stroke" style="font-family:'Liberation Sans',sans-serif">168</text>
<text x="82.5" y="225.7" text-anchor="middle" font-size="8.4" font-weight="bold" fill="#2a2a2a" stroke="#fff" stroke-width="2.2" stroke-opacity="0.8" paint-order="stroke" style="font-family:'Liberation Sans',sans-serif">N/A</text>
<text x="128.3" y="237.5" text-anchor="middle" font-size="8.4" font-weight="bold" fill="#2a2a2a" stroke="#fff" stroke-width="2.2" stroke-opacity="0.8" paint-order="stroke" style="font-family:'Liberation Sans',sans-serif">77</text>
<text x="122.4" y="256.5" text-anchor="middle" font-size="8.4" font-weight="bold" fill="#2a2a2a" stroke="#fff" stroke-width="2.2" stroke-opacity="0.8" paint-order="stroke" style="font-family:'Liberation Sans',sans-serif">N/A</text>
<text x="137.6" y="251" text-anchor="middle" font-size="8.4" font-weight="bold" fill="#2a2a2a" stroke="#fff" stroke-width="2.2" stroke-opacity="0.8" paint-order="stroke" style="font-family:'Liberation Sans',sans-serif">122</text>
<text x="152.3" y="259" text-anchor="middle" font-size="8.4" font-weight="bold" fill="#2a2a2a" stroke="#fff" stroke-width="2.2" stroke-opacity="0.8" paint-order="stroke" style="font-family:'Liberation Sans',sans-serif">104</text>
<text x="155.6" y="254.5" text-anchor="middle" font-size="8.4" font-weight="bold" fill="#2a2a2a" stroke="#fff" stroke-width="2.2" stroke-opacity="0.8" paint-order="stroke" style="font-family:'Liberation Sans',sans-serif">155</text>
<text x="94.2" y="269.8" text-anchor="middle" font-size="8.4" font-weight="bold" fill="#2a2a2a" stroke="#fff" stroke-width="2.2" stroke-opacity="0.8" paint-order="stroke" style="font-family:'Liberation Sans',sans-serif">82</text>
<text x="69.6" y="294.1" text-anchor="middle" font-size="8.4" font-weight="bold" fill="#2a2a2a" stroke="#fff" stroke-width="2.2" stroke-opacity="0.8" paint-order="stroke" style="font-family:'Liberation Sans',sans-serif">72</text>
<text x="207.4" y="213.5" text-anchor="middle" font-size="8.4" font-weight="bold" fill="#2a2a2a" stroke="#fff" stroke-width="2.2" stroke-opacity="0.8" paint-order="stroke" style="font-family:'Liberation Sans',sans-serif">263</text>
<text x="215.1" y="217.5" text-anchor="middle" font-size="8.4" font-weight="bold" fill="#2a2a2a" stroke="#fff" stroke-width="2.2" stroke-opacity="0.8" paint-order="stroke" style="font-family:'Liberation Sans',sans-serif">2.</text>
<text x="223.7" y="216.5" text-anchor="middle" font-size="8.4" font-weight="bold" fill="#2a2a2a" stroke="#fff" stroke-width="2.2" stroke-opacity="0.8" paint-order="stroke" style="font-family:'Liberation Sans',sans-serif">164</text>
<text x="227.6" y="227.4" text-anchor="middle" font-size="8.4" font-weight="bold" fill="#2a2a2a" stroke="#fff" stroke-width="2.2" stroke-opacity="0.8" paint-order="stroke" style="font-family:'Liberation Sans',sans-serif">163</text>
<text x="239" y="240" text-anchor="middle" font-size="8.4" font-weight="bold" fill="#2a2a2a" stroke="#fff" stroke-width="2.2" stroke-opacity="0.8" paint-order="stroke" style="font-family:'Liberation Sans',sans-serif">158</text>
<text x="269.8" y="244.1" text-anchor="middle" font-size="8.4" font-weight="bold" fill="#2a2a2a" stroke="#fff" stroke-width="2.2" stroke-opacity="0.8" paint-order="stroke" style="font-family:'Liberation Sans',sans-serif">166</text>
<text x="200.4" y="256" text-anchor="middle" font-size="8.4" font-weight="bold" fill="#2a2a2a" stroke="#fff" stroke-width="2.2" stroke-opacity="0.8" paint-order="stroke" style="font-family:'Liberation Sans',sans-serif">246</text>
<text x="281.5" y="265.9" text-anchor="middle" font-size="8.4" font-weight="bold" fill="#2a2a2a" stroke="#fff" stroke-width="2.2" stroke-opacity="0.8" paint-order="stroke" style="font-family:'Liberation Sans',sans-serif">185</text>
<text x="289.5" y="260.6" text-anchor="middle" font-size="8.4" font-weight="bold" fill="#2a2a2a" stroke="#fff" stroke-width="2.2" stroke-opacity="0.8" paint-order="stroke" style="font-family:'Liberation Sans',sans-serif">328</text>
<text x="222.5" y="279.8" text-anchor="middle" font-size="8.4" font-weight="bold" fill="#2a2a2a" stroke="#fff" stroke-width="2.2" stroke-opacity="0.8" paint-order="stroke" style="font-family:'Liberation Sans',sans-serif">166</text>
<text x="243.6" y="286.4" text-anchor="middle" font-size="8.4" font-weight="bold" fill="#2a2a2a" stroke="#fff" stroke-width="2.2" stroke-opacity="0.8" paint-order="stroke" style="font-family:'Liberation Sans',sans-serif">154</text>
<text x="251" y="303.3" text-anchor="middle" font-size="8.4" font-weight="bold" fill="#2a2a2a" stroke="#fff" stroke-width="2.2" stroke-opacity="0.8" paint-order="stroke" style="font-family:'Liberation Sans',sans-serif">128</text>
<text x="311.1" y="288.8" text-anchor="middle" font-size="8.4" font-weight="bold" fill="#2a2a2a" stroke="#fff" stroke-width="2.2" stroke-opacity="0.8" paint-order="stroke" style="font-family:'Liberation Sans',sans-serif">132</text>
<text x="336.2" y="284.8" text-anchor="middle" font-size="8.4" font-weight="bold" fill="#2a2a2a" stroke="#fff" stroke-width="2.2" stroke-opacity="0.8" paint-order="stroke" style="font-family:'Liberation Sans',sans-serif">73</text>
<text x="348.3" y="272" text-anchor="middle" font-size="8.4" font-weight="bold" fill="#2a2a2a" stroke="#fff" stroke-width="2.2" stroke-opacity="0.8" paint-order="stroke" style="font-family:'Liberation Sans',sans-serif">95</text>
<text x="375.9" y="263.9" text-anchor="middle" font-size="8.4" font-weight="bold" fill="#2a2a2a" stroke="#fff" stroke-width="2.2" stroke-opacity="0.8" paint-order="stroke" style="font-family:'Liberation Sans',sans-serif">56</text>
<text x="351.2" y="310.3" text-anchor="middle" font-size="8.4" font-weight="bold" fill="#2a2a2a" stroke="#fff" stroke-width="2.2" stroke-opacity="0.8" paint-order="stroke" style="font-family:'Liberation Sans',sans-serif">65</text>
<text x="407.5" y="229.2" text-anchor="middle" font-size="8.4" font-weight="bold" fill="#2a2a2a" stroke="#fff" stroke-width="2.2" stroke-opacity="0.8" paint-order="stroke" style="font-family:'Liberation Sans',sans-serif">70</text>
<text x="415.2" y="179.3" text-anchor="middle" font-size="8.4" font-weight="bold" fill="#2a2a2a" stroke="#fff" stroke-width="2.2" stroke-opacity="0.8" paint-order="stroke" style="font-family:'Liberation Sans',sans-serif">161</text>
<text x="388" y="188.5" text-anchor="middle" font-size="8.4" font-weight="bold" fill="#2a2a2a" stroke="#fff" stroke-width="2.2" stroke-opacity="0.8" paint-order="stroke" style="font-family:'Liberation Sans',sans-serif">241</text>
<text x="352.2" y="146.9" text-anchor="middle" font-size="8.4" font-weight="bold" fill="#2a2a2a" stroke="#fff" stroke-width="2.2" stroke-opacity="0.8" paint-order="stroke" style="font-family:'Liberation Sans',sans-serif">179</text>
</svg></div>
<div class="abs" style="left:196px;top:65.5px;width:107px;height:89.5px;background:#fff;border-radius:7px;box-shadow:0 2px 9px rgba(0,0,0,0.35)"></div>
<svg class="abs" style="left:216px;top:150px" width="26" height="16" viewBox="0 0 26 16"><path d="M6 5 L13 12.5 L20 5Z" fill="#fff"/></svg>
<div class="abs" style="left:-0.30px;top:75.81px;width:500px;text-align:center;font-size:9.4px;line-height:9.4px;color:#222;font-weight:normal;white-space:nowrap;">Bishkek</div>
<div class="abs" style="left:-0.30px;top:85.91px;width:500px;text-align:center;font-size:9.4px;line-height:9.4px;color:#222;font-weight:normal;white-space:nowrap;">2021-02-13 9:00 AM</div>
<div class="abs" style="left:-0.30px;top:95.51px;width:500px;text-align:center;font-size:9.4px;line-height:9.4px;color:#222;font-weight:normal;white-space:nowrap;">(LT)</div>
<div class="abs" style="left:206px;top:106px;width:87px;height:39px;border:1px solid #004785;background:#fff"></div>
<div class="abs" style="left:206px;top:106px;width:87px;height:19px;background:#004785"></div>
<div class="abs" style="left:261.8px;top:125px;width:30.5px;height:19px;background:#ff7e00"></div>
<div class="abs" style="left:-15.70px;top:108.91px;width:500px;text-align:center;font-size:9.75px;line-height:9.75px;color:#fff;font-weight:bold;white-space:nowrap;">Pollutant</div>
<div class="abs" style="left:27.60px;top:108.91px;width:500px;text-align:center;font-size:9.75px;line-height:9.75px;color:#fff;font-weight:bold;white-space:nowrap;">AQI</div>
<div class="abs" style="left:-15.70px;top:127.95px;width:500px;text-align:center;font-size:9.7px;line-height:9.7px;color:#333;font-weight:normal;white-space:nowrap;">PM2.5</div>
<div class="abs" style="left:27.40px;top:127.95px;width:500px;text-align:center;font-size:9.7px;line-height:9.7px;color:#fff;font-weight:bold;white-space:nowrap;">147</div>
<div class="abs" style="left:502px;top:5px;width:222px;height:23px;background:#004785"></div>
<div class="abs" style="left:502px;top:28px;width:222px;height:1.5px;background:#dcdcdc"></div>
<div class="abs" style="left:502px;top:29.5px;width:223px;height:24px;background:#fff;border:1px solid #c8c8c8;border-radius:3px"></div>
<div class="abs" style="left:502px;top:68px;width:222px;height:22.6px;background:#004785"></div>
<div class="abs" style="left:502px;top:90.6px;width:222px;height:1.5px;background:#dcdcdc"></div>
<div class="abs" style="left:502px;top:92.7px;width:223px;height:24px;background:#fff;border:1px solid #c8c8c8;border-radius:3px"></div>
<div class="abs" style="left:505.00px;top:11.89px;font-size:9.3px;line-height:9.3px;color:#fff;font-weight:normal;white-space:nowrap;-webkit-text-stroke:0.25px #fff">Select a City</div>
<div class="abs" style="left:508.80px;top:36.78px;font-size:9.2px;line-height:9.2px;color:#333;font-weight:normal;white-space:nowrap;">Bishkek</div>
<div class="abs" style="left:505.00px;top:75.89px;font-size:9.3px;line-height:9.3px;color:#fff;font-weight:normal;white-space:nowrap;-webkit-text-stroke:0.25px #fff">Select a Parameter</div>
<div class="abs" style="left:508.30px;top:99.58px;font-size:9.2px;line-height:9.2px;color:#333;font-weight:normal;white-space:nowrap;">PM2.5</div>
<svg class="abs" style="left:695px;top:33px" width="25" height="12" viewBox="0 0 25 12"><path d="M4.3 4.3 L9.6 9.2 M9.6 4.3 L4.3 9.2" stroke="#999" stroke-width="1"/><path d="M16.2 6.1 L21.7 6.1 L18.95 9 Z" fill="#888"/></svg>
<svg class="abs" style="left:695px;top:96px" width="25" height="12" viewBox="0 0 25 12"><path d="M4.3 4.3 L9.6 9.2 M9.6 4.3 L4.3 9.2" stroke="#999" stroke-width="1"/><path d="M16.2 6.1 L21.7 6.1 L18.95 9 Z" fill="#888"/></svg>
<div class="abs" style="left:501.2px;top:130.2px;width:223.5px;height:48.3px;background:#fff;border:1.3px solid #cdcdcd"></div>
<div class="abs" style="left:508.30px;top:138.69px;font-size:9.3px;line-height:9.3px;color:#333;font-weight:bold;white-space:nowrap;">Bishkek</div>
<svg class="abs" style="left:694px;top:148px" width="23" height="23" viewBox="0 0 23 23">
<rect width="23" height="23" fill="#f2b33d"/>
<circle cx="5" cy="17.9" r="2.5" fill="#fff"/>
<path d="M2.9 10.2 L5 10.2 A7.7 7.7 0 0 1 12.7 17.9 L12.7 19.5" stroke="#fff" stroke-width="3.5" fill="none"/>
<path d="M2.9 4.4 L5 4.4 A13.5 13.5 0 0 1 18.5 17.9 L18.5 19.5" stroke="#fff" stroke-width="3.4" fill="none"/>
</svg>
<div class="abs" style="left:500.90px;top:188.88px;font-size:7.43px;line-height:7.43px;color:#555;font-weight:normal;white-space:nowrap;">Note: Values above 500 are considered Beyond the AQI. Follow</div>
<div class="abs" style="left:500.90px;top:201.87px;font-size:7.33px;line-height:7.33px;color:#555;font-weight:normal;white-space:nowrap;">recommendations for the Hazardous category. Additional information</div>
<div class="abs" style="left:500.90px;top:214.76px;font-size:7.34px;line-height:7.34px;color:#555;font-weight:normal;white-space:nowrap;">on reducing exposure to extremely high levels of particle pollution is</div>
<div class="abs" style="left:500.90px;top:227.58px;font-size:7.43px;line-height:7.43px;color:#555;font-weight:normal;white-space:nowrap;">available <span style="color:#0a3d6e;font-weight:bold;text-decoration:underline">here</span>.</div>
<div class="abs" style="left:12.3px;top:317.1px;width:71.2px;height:20px;background:#fff;border:1px solid #a9a9a9;border-top:2px solid #004785;border-bottom:none;border-radius:4px 4px 0 0"></div>
<div class="abs" style="left:86.2px;top:317.4px;width:110.3px;height:19.6px;background:#d3d3d3;border-radius:4px 4px 0 0"></div>
<div class="abs" style="left:199.2px;top:317.4px;width:91.6px;height:19.6px;background:#d3d3d3;border-radius:4px 4px 0 0"></div>
<div class="abs" style="left:12px;top:337px;width:713px;height:1px;background:#a9a9a9"></div>
<div class="abs" style="left:-202.40px;top:324.19px;width:500px;text-align:center;font-size:9.9px;line-height:9.9px;color:#222;font-weight:normal;white-space:nowrap;">AQI</div>
<div class="abs" style="left:-108.90px;top:324.94px;width:500px;text-align:center;font-size:9.25px;line-height:9.25px;color:#666;font-weight:normal;white-space:nowrap;">Concentration</div>
<div class="abs" style="left:-5.10px;top:324.94px;width:500px;text-align:center;font-size:9.25px;line-height:9.25px;color:#666;font-weight:normal;white-space:nowrap;">Historical</div>
<div class="abs" style="left:12.50px;top:345.47px;font-size:9.45px;line-height:9.45px;color:#222;font-weight:normal;white-space:nowrap;">Learn more about how the Air Quality Index [AQI] is calculated from the EPA <span style="color:#123f6e;text-decoration:underline">here</span>.</div>
<div class="abs" style="left:12px;top:371px;width:534px;height:240px;background:#fff"></div>
<svg class="abs" style="left:0;top:0" width="742" height="604" viewBox="0 0 742 604">
<rect x="63.1" y="508.68" width="476.1" height="1" fill="#e6e6e6"/>
<rect x="63.1" y="484.36" width="476.1" height="1" fill="#e6e6e6"/>
<rect x="63.1" y="460.04" width="476.1" height="1" fill="#e6e6e6"/>
<rect x="63.1" y="435.72" width="476.1" height="1" fill="#e6e6e6"/>
<rect x="63.1" y="411.40" width="476.1" height="1" fill="#e6e6e6"/>
<text x="52.3" y="535.20" text-anchor="end" font-size="7.3" font-weight="bold" fill="#333">0</text>
<text x="52.3" y="510.88" text-anchor="end" font-size="7.3" font-weight="bold" fill="#333">100</text>
<text x="52.3" y="486.56" text-anchor="end" font-size="7.3" font-weight="bold" fill="#333">200</text>
<text x="52.3" y="462.24" text-anchor="end" font-size="7.3" font-weight="bold" fill="#333">300</text>
<text x="52.3" y="437.92" text-anchor="end" font-size="7.3" font-weight="bold" fill="#333">400</text>
<text x="52.3" y="413.60" text-anchor="end" font-size="7.3" font-weight="bold" fill="#333">500</text>
<text transform="translate(31.3,469.3) rotate(-90)" text-anchor="middle" font-size="8.8" font-weight="bold" fill="#222">AQI</text>
<text x="279" y="386.7" text-anchor="middle" font-size="12.2" letter-spacing="0.2" fill="#333">Bishkek – PM2.5</text>
<rect x="63.1" y="533.0" width="476.1" height="1" fill="#ccd6eb"/>
<rect x="62.60" y="533.5" width="1" height="6.5" fill="#ccd6eb"/>
<rect x="82.44" y="533.5" width="1" height="6.5" fill="#ccd6eb"/>
<rect x="102.28" y="533.5" width="1" height="6.5" fill="#ccd6eb"/>
<rect x="122.11" y="533.5" width="1" height="6.5" fill="#ccd6eb"/>
<rect x="141.95" y="533.5" width="1" height="6.5" fill="#ccd6eb"/>
<rect x="161.79" y="533.5" width="1" height="6.5" fill="#ccd6eb"/>
<rect x="181.62" y="533.5" width="1" height="6.5" fill="#ccd6eb"/>
<rect x="201.46" y="533.5" width="1" height="6.5" fill="#ccd6eb"/>
<rect x="221.30" y="533.5" width="1" height="6.5" fill="#ccd6eb"/>
<rect x="241.14" y="533.5" width="1" height="6.5" fill="#ccd6eb"/>
<rect x="260.98" y="533.5" width="1" height="6.5" fill="#ccd6eb"/>
<rect x="280.81" y="533.5" width="1" height="6.5" fill="#ccd6eb"/>
<rect x="300.65" y="533.5" width="1" height="6.5" fill="#ccd6eb"/>
<rect x="320.49" y="533.5" width="1" height="6.5" fill="#ccd6eb"/>
<rect x="340.33" y="533.5" width="1" height="6.5" fill="#ccd6eb"/>
<rect x="360.16" y="533.5" width="1" height="6.5" fill="#ccd6eb"/>
<rect x="380.00" y="533.5" width="1" height="6.5" fill="#ccd6eb"/>
<rect x="399.84" y="533.5" width="1" height="6.5" fill="#ccd6eb"/>
<rect x="419.68" y="533.5" width="1" height="6.5" fill="#ccd6eb"/>
<rect x="439.51" y="533.5" width="1" height="6.5" fill="#ccd6eb"/>
<rect x="459.35" y="533.5" width="1" height="6.5" fill="#ccd6eb"/>
<rect x="479.19" y="533.5" width="1" height="6.5" fill="#ccd6eb"/>
<rect x="499.03" y="533.5" width="1" height="6.5" fill="#ccd6eb"/>
<rect x="518.86" y="533.5" width="1" height="6.5" fill="#ccd6eb"/>
<rect x="538.70" y="533.5" width="1" height="6.5" fill="#ccd6eb"/>
<rect x="68.02" y="519.30" width="10" height="14.20" fill="#ffff00" stroke="#333" stroke-width="1.1"/>
<rect x="87.86" y="519.30" width="10" height="14.20" fill="#ffff00" stroke="#333" stroke-width="1.1"/>
<rect x="107.69" y="513.60" width="10" height="19.90" fill="#ffff00" stroke="#333" stroke-width="1.1"/>
<rect x="127.53" y="497.90" width="10" height="35.60" fill="#ff7e00" stroke="#333" stroke-width="1.1"/>
<rect x="147.37" y="498.70" width="10" height="34.80" fill="#ff7e00" stroke="#333" stroke-width="1.1"/>
<rect x="167.21" y="503.50" width="10" height="30.00" fill="#ff7e00" stroke="#333" stroke-width="1.1"/>
<rect x="187.04" y="511.60" width="10" height="21.90" fill="#ffff00" stroke="#333" stroke-width="1.1"/>
<rect x="206.88" y="512.00" width="10" height="21.50" fill="#ffff00" stroke="#333" stroke-width="1.1"/>
<rect x="226.72" y="510.00" width="10" height="23.50" fill="#ffff00" stroke="#333" stroke-width="1.1"/>
<rect x="246.56" y="505.10" width="10" height="28.40" fill="#ff7e00" stroke="#333" stroke-width="1.1"/>
<rect x="266.39" y="493.80" width="10" height="39.70" fill="#ff0000" stroke="#333" stroke-width="1.1"/>
<rect x="286.23" y="493.80" width="10" height="39.70" fill="#ff0000" stroke="#333" stroke-width="1.1"/>
<rect x="306.07" y="491.00" width="10" height="42.50" fill="#ff0000" stroke="#333" stroke-width="1.1"/>
<rect x="325.91" y="491.00" width="10" height="42.50" fill="#ff0000" stroke="#333" stroke-width="1.1"/>
<rect x="345.74" y="491.80" width="10" height="41.70" fill="#ff0000" stroke="#333" stroke-width="1.1"/>
<rect x="365.58" y="491.00" width="10" height="42.50" fill="#ff0000" stroke="#333" stroke-width="1.1"/>
<rect x="385.42" y="492.20" width="10" height="41.30" fill="#ff0000" stroke="#333" stroke-width="1.1"/>
<rect x="405.26" y="491.80" width="10" height="41.70" fill="#ff0000" stroke="#333" stroke-width="1.1"/>
<rect x="425.09" y="492.20" width="10" height="41.30" fill="#ff0000" stroke="#333" stroke-width="1.1"/>
<rect x="444.93" y="493.80" width="10" height="39.70" fill="#ff0000" stroke="#333" stroke-width="1.1"/>
<rect x="464.77" y="494.20" width="10" height="39.30" fill="#ff0000" stroke="#333" stroke-width="1.1"/>
<rect x="484.61" y="496.60" width="10" height="36.90" fill="#ff0000" stroke="#333" stroke-width="1.1"/>
<rect x="504.44" y="507.50" width="10" height="26.00" fill="#ff7e00" stroke="#333" stroke-width="1.1"/>
<rect x="524.28" y="497.80" width="10" height="35.70" fill="#ff7e00" stroke="#333" stroke-width="1.1"/>
<text transform="translate(74.92,543.6) rotate(-45)" text-anchor="end" font-size="8.2" fill="#666" word-spacing="1">10 AM</text>
<text transform="translate(94.76,543.6) rotate(-45)" text-anchor="end" font-size="8.2" fill="#666" word-spacing="1">11 AM</text>
<text transform="translate(114.59,543.6) rotate(-45)" text-anchor="end" font-size="8.2" fill="#666" word-spacing="1">12 PM</text>
<text transform="translate(134.43,543.6) rotate(-45)" text-anchor="end" font-size="8.2" fill="#666" word-spacing="1">1 PM</text>
<text transform="translate(154.27,543.6) rotate(-45)" text-anchor="end" font-size="8.2" fill="#666" word-spacing="1">2 PM</text>
<text transform="translate(174.11,543.6) rotate(-45)" text-anchor="end" font-size="8.2" fill="#666" word-spacing="1">3 PM</text>
<text transform="translate(193.94,543.6) rotate(-45)" text-anchor="end" font-size="8.2" fill="#666" word-spacing="1">4 PM</text>
<text transform="translate(213.78,543.6) rotate(-45)" text-anchor="end" font-size="8.2" fill="#666" word-spacing="1">5 PM</text>
<text transform="translate(233.62,543.6) rotate(-45)" text-anchor="end" font-size="8.2" fill="#666" word-spacing="1">6 PM</text>
<text transform="translate(253.46,543.6) rotate(-45)" text-anchor="end" font-size="8.2" fill="#666" word-spacing="1">7 PM</text>
<text transform="translate(273.29,543.6) rotate(-45)" text-anchor="end" font-size="8.2" fill="#666" word-spacing="1">8 PM</text>
<text transform="translate(293.13,543.6) rotate(-45)" text-anchor="end" font-size="8.2" fill="#666" word-spacing="1">9 PM</text>
<text transform="translate(312.97,543.6) rotate(-45)" text-anchor="end" font-size="8.2" fill="#666" word-spacing="1">10 PM</text>
<text transform="translate(332.81,543.6) rotate(-45)" text-anchor="end" font-size="8.2" fill="#666" word-spacing="1">11 PM</text>
<text transform="translate(352.64,543.6) rotate(-45)" text-anchor="end" font-size="8.2" fill="#666" word-spacing="1">Feb 13, 2021 12 AM</text>
<text transform="translate(372.48,543.6) rotate(-45)" text-anchor="end" font-size="8.2" fill="#666" word-spacing="1">1 AM</text>
<text transform="translate(392.32,543.6) rotate(-45)" text-anchor="end" font-size="8.2" fill="#666" word-spacing="1">2 AM</text>
<text transform="translate(412.16,543.6) rotate(-45)" text-anchor="end" font-size="8.2" fill="#666" word-spacing="1">3 AM</text>
<text transform="translate(431.99,543.6) rotate(-45)" text-anchor="end" font-size="8.2" fill="#666" word-spacing="1">4 AM</text>
<text transform="translate(451.83,543.6) rotate(-45)" text-anchor="end" font-size="8.2" fill="#666" word-spacing="1">5 AM</text>
<text transform="translate(471.67,543.6) rotate(-45)" text-anchor="end" font-size="8.2" fill="#666" word-spacing="1">6 AM</text>
<text transform="translate(491.51,543.6) rotate(-45)" text-anchor="end" font-size="8.2" fill="#666" word-spacing="1">7 AM</text>
<text transform="translate(511.34,543.6) rotate(-45)" text-anchor="end" font-size="8.2" fill="#666" word-spacing="1">8 AM</text>
<text transform="translate(531.18,543.6) rotate(-45)" text-anchor="end" font-size="8.2" fill="#666" word-spacing="1">9 AM</text>
</svg>
<div class="abs" style="left:557px;top:371px;width:168px;height:228.3px;border:1.3px solid #004785;background:#efefef"></div>
<div class="abs" style="left:557px;top:371px;width:168px;height:50px;background:#004785"></div>
<div class="abs" style="left:558.2px;top:420.6px;width:165.8px;height:96px;background:#ff7e00"></div>
<div class="abs" style="left:390.50px;top:377.53px;width:500px;text-align:center;font-size:10.2px;line-height:10.2px;color:#fff;font-weight:bold;white-space:nowrap;">Current Conditions</div>
<div class="abs" style="left:391.20px;top:391.80px;width:500px;text-align:center;font-size:8px;line-height:8px;color:#fff;font-weight:bold;white-space:nowrap;">observed at</div>
<div class="abs" style="left:391.00px;top:405.40px;width:500px;text-align:center;font-size:10px;line-height:10px;color:#fff;font-weight:bold;white-space:nowrap;">Feb 13, 2021 9:00 AM (LT)</div>
<div class="abs" style="left:390.50px;top:433.58px;width:500px;text-align:center;font-size:13.2px;line-height:13.2px;color:#fff;font-weight:bold;white-space:nowrap;">147 AQI</div>
<div class="abs" style="left:390.50px;top:452.45px;width:500px;text-align:center;font-size:13.2px;line-height:13.2px;color:#fff;font-weight:bold;white-space:nowrap;">Unhealthy for Sensitive</div>
<div class="abs" style="left:390.50px;top:471.32px;width:500px;text-align:center;font-size:13.2px;line-height:13.2px;color:#fff;font-weight:bold;white-space:nowrap;">Groups</div>
<div class="abs" style="left:390.50px;top:490.19px;width:500px;text-align:center;font-size:13.2px;line-height:13.2px;color:#fff;font-weight:bold;white-space:nowrap;">PM2.5</div>
<div class="abs" style="left:390.70px;top:524.33px;width:500px;text-align:center;font-size:8.2px;line-height:8.2px;color:#222;font-weight:bold;white-space:nowrap;">Health Message</div>
<div class="abs" style="left:560.90px;top:540.15px;font-size:8.3px;line-height:8.3px;color:#555;font-weight:normal;white-space:nowrap;">When AQI values are between 101 and 150,</div>
<div class="abs" style="left:560.90px;top:554.22px;font-size:8.3px;line-height:8.3px;color:#555;font-weight:normal;white-space:nowrap;">members of sensitive groups may</div>
<div class="abs" style="left:560.90px;top:568.29px;font-size:8.3px;line-height:8.3px;color:#555;font-weight:normal;white-space:nowrap;">experience health effects, but the general</div>
<div class="abs" style="left:560.90px;top:582.36px;font-size:8.3px;line-height:8.3px;color:#555;font-weight:normal;white-space:nowrap;">public is unlikely to be affected.</div>
</body></html>
